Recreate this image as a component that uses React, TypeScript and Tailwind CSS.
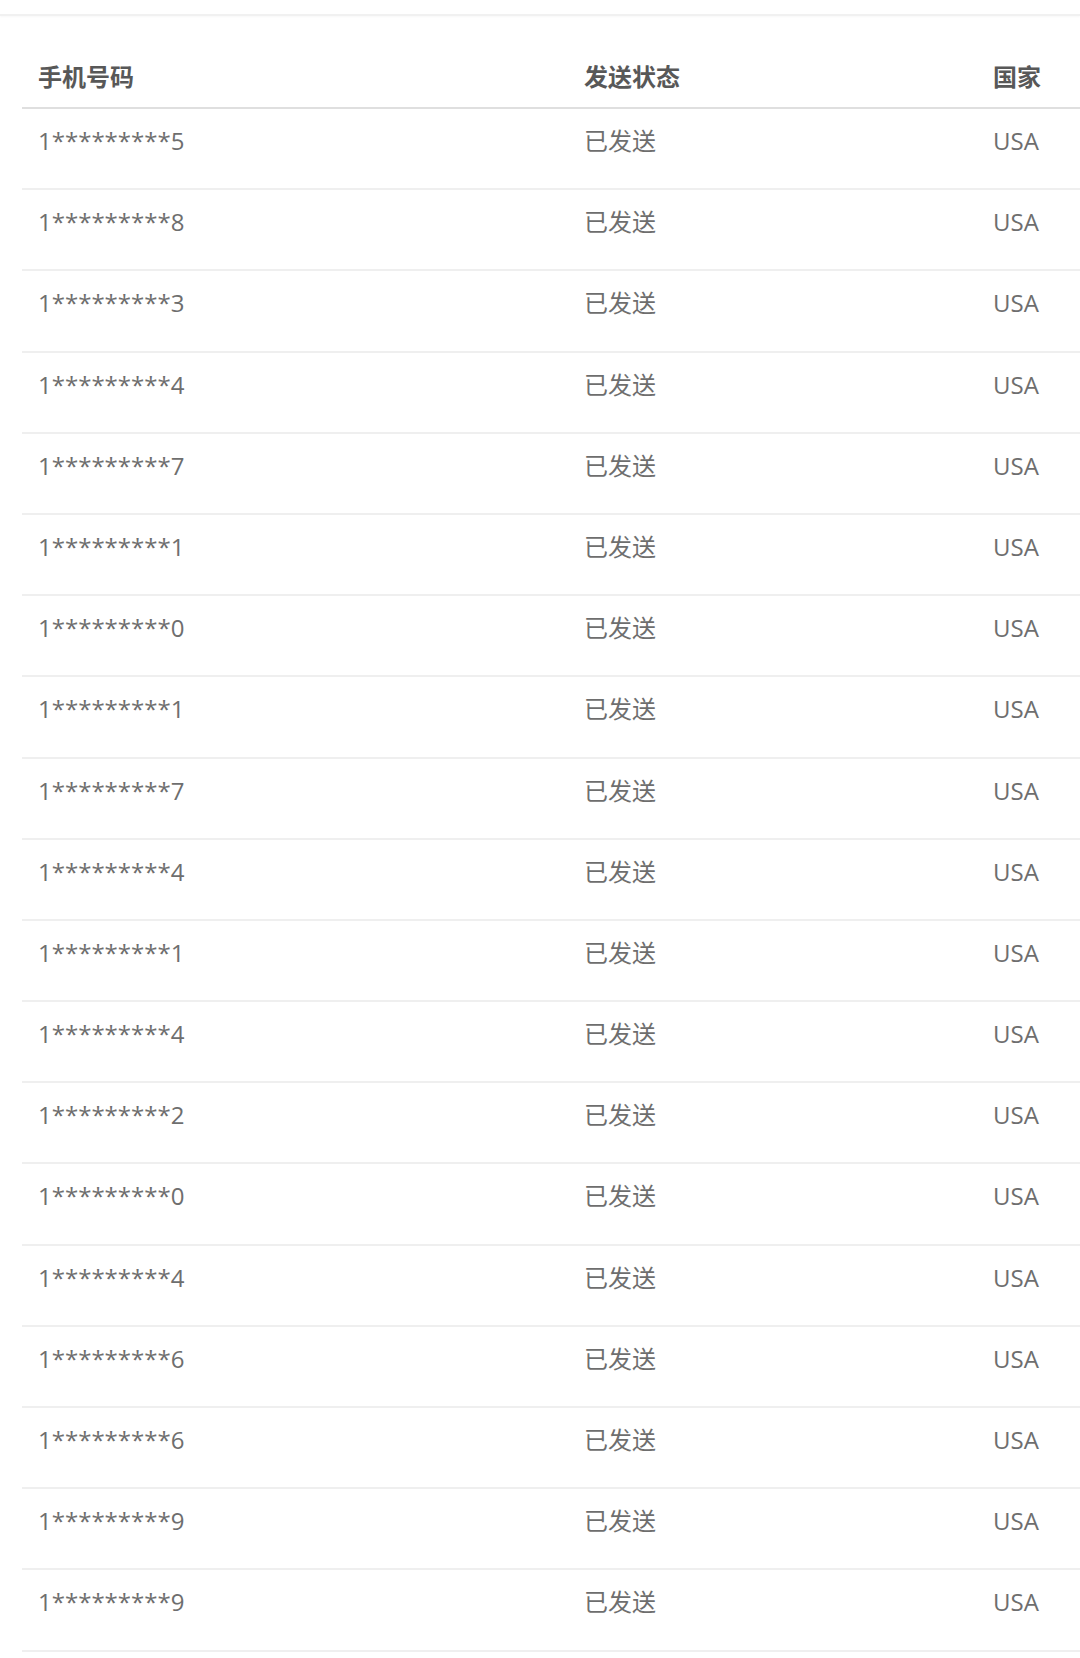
import React from "react";

const digits = ["5","8","3","4","7","1","0","1","7","4","1","4","2","0","4","6","6","9","9"];

export default function App() {
  const font = { fontFamily: '"Open Sans", "Noto Sans CJK SC", sans-serif' };
  return (
    <div className="w-[1080px] h-[1658px] bg-white overflow-hidden" style={font}>
      <div className="h-[16px] border-b-2 border-[#f1f1f1] shadow-[0_1px_2px_rgba(0,0,0,0.03)]" />
      <div className="ml-[22px] w-[1058px]">
        <div className="grid grid-cols-[546px_409px_1fr] border-b-2 border-[#dfdfdf] pt-[45px] pb-[14px] text-[24px] leading-[32px] font-semibold text-[#585858]">
          <div className="pl-[16px]">手机号码</div>
          <div className="pl-[16px]">发送状态</div>
          <div className="pl-[16px]">国家</div>
        </div>
        {digits.map((d, i) => (
          <div
            key={i}
            className="grid grid-cols-[546px_409px_1fr] h-[81.2px] box-border border-b-2 border-[#efefef] pt-[16px] text-[24px] leading-[32px] text-[#6e6e6e]"
          >
            <div className="pl-[16px]">{"1*********" + d}</div>
            <div className="pl-[16px]">已发送</div>
            <div className="pl-[16px]">USA</div>
          </div>
        ))}
      </div>
    </div>
  );
}
